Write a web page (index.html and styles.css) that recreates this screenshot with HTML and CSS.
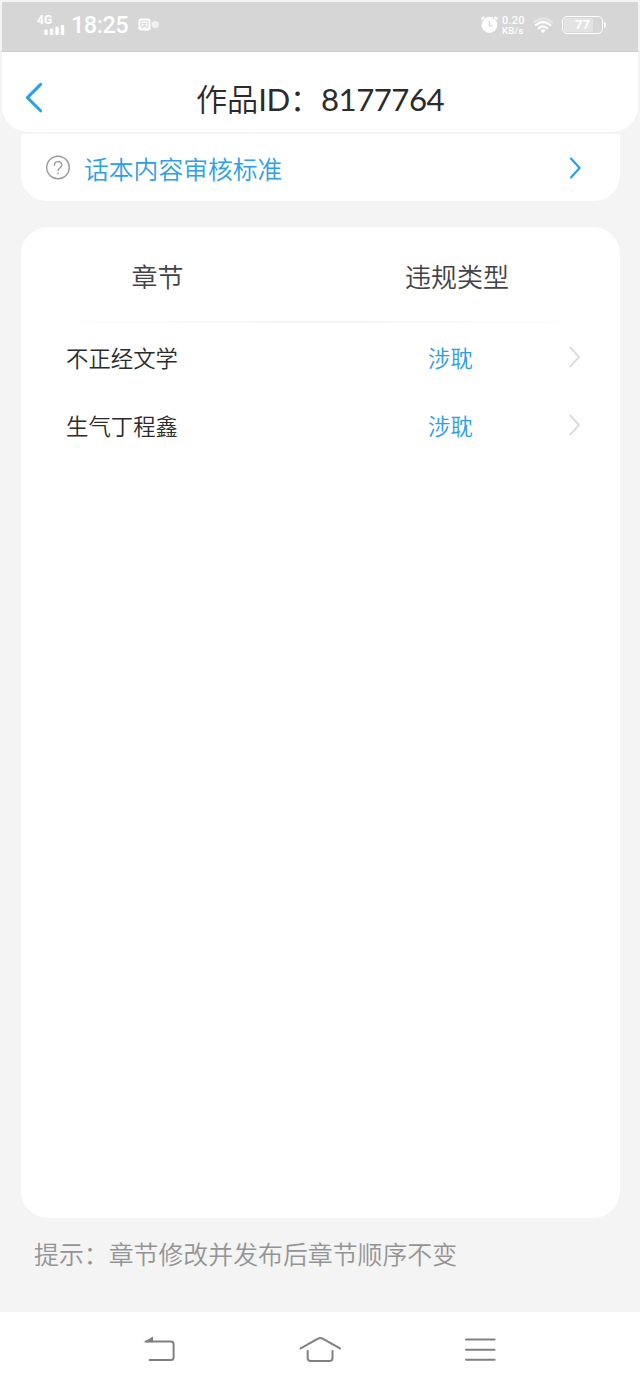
FILE: index.html
```html
<!DOCTYPE html>
<html lang="zh-CN">
<head>
    <meta charset="UTF-8">
    <meta name="viewport" content="width=device-width, initial-scale=1.0">
    <title>作品ID：8177764</title>
    <link rel="stylesheet" href="styles.css">
</head>
<body>
    <div class="status-bar">
        <div class="status-signal">
            <span class="network">4G</span>
            <svg class="bars" width="21" height="10" viewBox="0 0 21 10">
                <path d="M2 6V8.5M7.5 5V8.5M13 3.2V8.5M18.5 1.5V8.5"/>
            </svg>
        </div>
        <span class="clock">18:25</span>
        <svg class="app-icon" width="22" height="14" viewBox="0 0 22 14">
            <rect class="solid" x="0.5" y="0.5" width="12" height="12" rx="2.5"/>
            <path class="cut" d="M3 8.5V3h7v5.5M4 10l2.5-3 2.5 3M5 5.5h3"/>
            <circle class="dot" cx="17.3" cy="6.5" r="3.6"/>
        </svg>
        <svg class="alarm" width="18" height="18" viewBox="0 0 18 18">
            <circle class="solid" cx="8.4" cy="9" r="7.9"/>
            <path class="ears" d="M1 2.8L2.6 1.4M14.2 1.4l1.6 1.4"/>
            <path class="cut" d="M8.4 5.4v4.4h2.8"/>
        </svg>
        <div class="speed">
            <span>0.20</span>
            <span>KB/s</span>
        </div>
        <svg class="wifi" width="20" height="17" viewBox="0 0 20 17">
            <path class="faint" d="M1 5.2Q10-2.2 19 5.2"/>
            <path d="M2.8 8Q10 2 17.2 8M5.8 11.2Q10 7.5 14.2 11.2"/>
            <path class="solid" d="M7.4 13.2Q10 11.2 12.6 13.2L10 16.3z"/>
        </svg>
        <div class="battery"><span class="battery-level">77</span></div>
    </div>

    <header class="header">
        <svg class="back" width="18" height="32" viewBox="0 0 18 32">
            <path d="M16.6 2.4L3.4 15.6L16.6 28.8"/>
        </svg>
        <h1 class="title">作品<span class="latin">ID</span>：<span class="latin">8177764</span></h1>
    </header>

    <main class="content">
        <a class="standard">
            <svg class="help" width="26" height="26" viewBox="0 0 26 26">
                <circle cx="13" cy="12.5" r="11.3"/>
                <path d="M9.4 10.2C9.4 5.4 16.8 5.4 16.8 10C16.8 12.8 13.1 12.8 13.1 15.6"/>
                <path d="M13.1 18v0.8"/>
            </svg>
            <span>话本内容审核标准</span>
            <svg class="arrow" width="12" height="22" viewBox="0 0 12 22">
                <path d="M1 1.6L9.6 11L1 20.4"/>
            </svg>
        </a>

        <section class="chapters">
            <div class="chapters-head">
                <span class="col-chapter">章节</span>
                <span class="col-type">违规类型</span>
            </div>
            <div class="divider"></div>
            <div class="row">
                <span class="name">不正经文学</span>
                <span class="type">涉耽</span>
                <svg class="arrow" width="12" height="22" viewBox="0 0 12 22">
                    <path d="M1.4 1.6L10 11L1.4 20.4"/>
                </svg>
            </div>
            <div class="row">
                <span class="name">生气丁程鑫</span>
                <span class="type">涉耽</span>
                <svg class="arrow" width="12" height="22" viewBox="0 0 12 22">
                    <path d="M1.4 1.6L10 11L1.4 20.4"/>
                </svg>
            </div>
        </section>

        <p class="hint">提示：章节修改并发布后章节顺序不变</p>
    </main>

    <nav class="nav-bar">
        <svg width="42" height="32" viewBox="0 0 42 32">
            <path d="M7 7.4H32Q34.6 7.4 34.6 9.9V23.4Q34.6 25.9 32 25.9H10.5"/>
            <path class="tip" d="M4.4 8.2L14 2.6V8.2z"/>
        </svg>
        <svg width="44" height="32" viewBox="0 0 44 32">
            <path d="M2.6 14.4L20 4.6Q22.3 3.4 24.6 4.6L42 14.4"/>
            <path d="M9.7 17V24Q9.7 27.1 12.7 27.1H31.5Q34.5 27.1 34.5 24V17"/>
        </svg>
        <svg width="42" height="32" viewBox="0 0 42 32">
            <path d="M7 5.6H35.6M7 15.7H35.6M7 25.8H35.6"/>
        </svg>
    </nav>
</body>
</html>
```
FILE: styles.css
```css
* {
    box-sizing: border-box;
}
body {
    display: flex;
    flex-direction: column;
    height: 1387px;
    margin: 0;
    font-family: "Noto Sans CJK SC", sans-serif;
    font-weight: 350;
    color: #2b2b2b;
    background-color: #f4f4f4;
}
svg {
    display: block;
    flex: none;
    fill: none;
    stroke-linecap: round;
    stroke-linejoin: round;
}

/* status bar */
.status-bar {
    display: flex;
    align-items: center;
    height: 52px;
    padding: 0 35px 3px 35px;
    border: 2px solid #f4f4f4;
    border-bottom: 1px solid #cbcbcb;
    background-color: #d6d6d6;
    color: #fff;
    font-family: Roboto, sans-serif;
}
.status-signal {
    width: 30px;
    height: 22px;
}
.network {
    display: block;
    height: 11px;
    font-size: 12px;
    line-height: 12px;
    font-weight: 700;
}
.bars {
    margin-left: 7px;
    stroke: #fff;
    stroke-width: 3.4;
}
.clock {
    width: 66px;
    padding-left: 4px;
    font-size: 23.5px;
    line-height: 28px;
    letter-spacing: -0.5px;
    font-weight: 500;
}
.app-icon {
    margin-left: 5px;
}
.solid {
    fill: #fff;
    stroke: none;
}
.cut {
    stroke: #d6d6d6;
    stroke-width: 1.2;
}
.dot {
    fill: #f0f0f0;
}
.alarm {
    margin-left: auto;
}
.ears {
    stroke: #fff;
    stroke-width: 2;
}
.speed {
    display: flex;
    flex-direction: column;
    width: 31px;
    margin-left: 3px;
    font-size: 11px;
    line-height: 11px;
    letter-spacing: 0.2px;
    font-weight: 500;
}
.speed span:last-child {
    font-size: 9.5px;
    line-height: 10px;
}
.wifi {
    margin-right: 9px;
    stroke: #fff;
    stroke-width: 2.2;
}
.faint {
    stroke: #e4e4e4;
}
.battery {
    position: relative;
    width: 41px;
    height: 18px;
    padding: 1px;
    border: 1.5px solid #fff;
    border-radius: 5px;
}
.battery::after {
    content: "";
    position: absolute;
    top: 5px;
    right: -4px;
    width: 2px;
    height: 6px;
    border-radius: 0 2px 2px 0;
    background-color: #fff;
}
.battery-level {
    display: block;
    width: 29px;
    height: 14px;
    padding-left: 11px;
    border-radius: 2px;
    background-color: #e3e3e3;
    font-size: 13px;
    line-height: 14px;
    font-weight: 700;
}

/* page header */
.header {
    display: flex;
    align-items: center;
    height: 80px;
    margin: 0 2px;
    padding: 12px 22px 0;
    border-radius: 0 0 26px 26px;
    background-color: #fff;
}
.back {
    stroke: #2b9fe8;
    stroke-width: 3;
}
.title {
    flex: 1;
    margin: 0 18px 0 0;
    font-size: 31.2px;
    line-height: 44px;
    font-weight: 350;
    text-align: center;
    white-space: nowrap;
}
.latin {
    font-family: Lato, sans-serif;
    font-weight: 400;
    letter-spacing: -0.5px;
}

/* cards */
.content {
    flex: 1;
    display: flex;
    flex-direction: column;
    padding: 2px 20px 0 21px;
}
.standard {
    display: flex;
    align-items: center;
    height: 67px;
    padding: 0 38px 0 24px;
    border-radius: 0 0 26px 26px;
    background-color: #fff;
    color: #2b9fe8;
    font-size: 24.8px;
    line-height: 36px;
}
.standard span {
    margin-left: 13px;
}
.standard .arrow {
    margin-left: auto;
    stroke: #2b9fe8;
    stroke-width: 2.2;
}
.help {
    stroke: #9b9b9b;
    stroke-width: 1.4;
}
.chapters {
    height: 991px;
    margin-top: 26px;
    border-radius: 27px;
    background-color: #fff;
}
.chapters-head {
    display: flex;
    height: 94px;
    padding-top: 30px;
    color: #424247;
    font-size: 26px;
    line-height: 38px;
}
.col-chapter {
    width: 273px;
    text-align: center;
}
.col-type {
    width: 326px;
    text-align: center;
}
.divider {
    height: 2px;
    margin: 0 26px;
    background: linear-gradient(to right, #fff, #f3f3f3 50%, #fff);
}
.row {
    display: flex;
    align-items: center;
    height: 68px;
    padding: 0 39px 0 45px;
    font-size: 22.4px;
    line-height: 32px;
}
.name {
    width: 362px;
}
.type {
    color: #2b9fe8;
}
.row .arrow {
    margin-left: auto;
    stroke: #dcdcdc;
    stroke-width: 2;
}
.hint {
    margin: 17px 0 0 13px;
    color: #949494;
    font-size: 24.9px;
    line-height: 36px;
}

/* system navigation */
.nav-bar {
    display: flex;
    justify-content: center;
    gap: 117px;
    height: 75px;
    padding-top: 22px;
    background-color: #fff;
    stroke: #808080;
    stroke-width: 2;
}
.tip {
    fill: #808080;
    stroke: none;
}
```
